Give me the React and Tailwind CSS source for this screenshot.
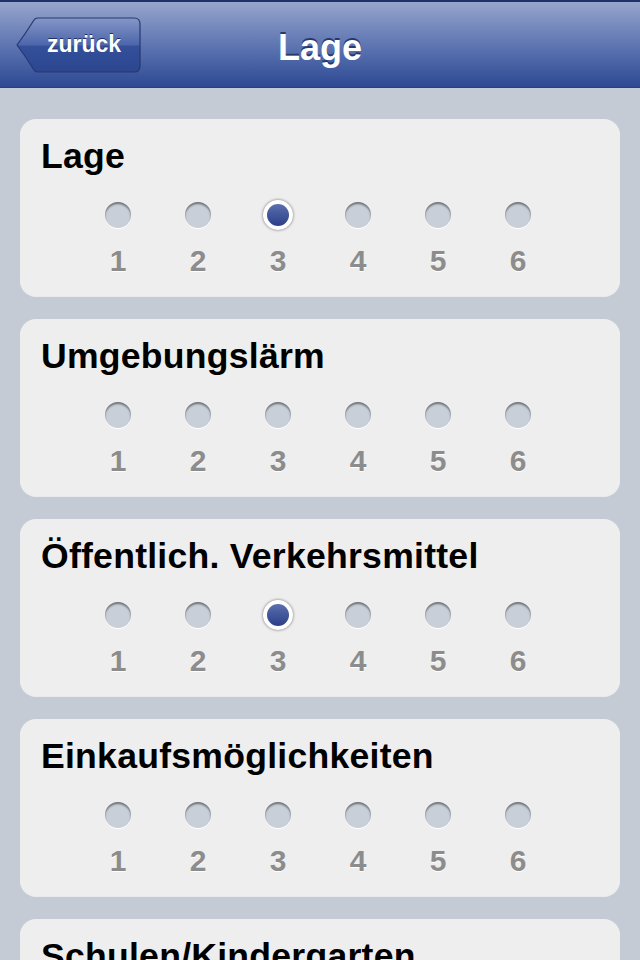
const sections = [
  { title: "Lage", value: 3 },
  { title: "Umgebungslärm", value: null },
  { title: "Öffentlich. Verkehrsmittel", value: 3 },
  { title: "Einkaufsmöglichkeiten", value: null },
  { title: "Schulen/Kindergarten", value: null },
];

const BackButton = () => {
  return (
    <button className="relative w-[126px] h-[58px] ml-[15px] mt-[14px] shrink-0">
      <svg width="126" height="58" viewBox="0 0 126 58" className="absolute inset-0">
        <defs>
          <linearGradient id="backFill" x1="0" y1="0" x2="0" y2="1">
            <stop offset="0" stopColor="#8597c8" />
            <stop offset="0.5" stopColor="#4d66aa" />
            <stop offset="0.52" stopColor="#34509a" />
            <stop offset="1" stopColor="#2c4690" />
          </linearGradient>
        </defs>
        <path
          d="M2 29 C8 21 14 12 19 4 Q20 2 23 2 H119 Q125 2 125 8 V50 Q125 56 119 56 H23 Q20 56 19 54 C14 46 8 37 2 29 Z"
          fill="url(#backFill)"
          stroke="#27386f"
          strokeWidth="1.2"
        />
      </svg>
      <span
        className="relative block text-white font-bold text-[23px] leading-none pl-[12px] pb-[2px]"
        style={{ fontFamily: '"Liberation Sans", Arial, sans-serif', textShadow: "0 -1px 0 #1f2f66" }}
      >
        zurück
      </span>
    </button>
  );
};

const Radio = ({ selected }) => {
  if (selected) {
    return (
      <div className="w-[30px] h-[30px] rounded-full bg-white flex items-center justify-center shadow-[0_0_3px_rgba(0,0,0,0.55)]">
        <div className="w-[22px] h-[22px] rounded-full bg-gradient-to-b from-[#5a6fae] to-[#2b3f88]" />
      </div>
    );
  }
  return (
    <div className="w-[26px] h-[26px] rounded-full bg-[#c8cfd9] shadow-[inset_0_2px_2px_rgba(0,0,0,0.45),0_1px_0_#ffffff]" />
  );
};

const Card = ({ title, value }) => {
  return (
    <div className="h-[177px] mb-[23px] rounded-[16px] bg-[#eeeeee] shadow-[0_1px_0_rgba(255,255,255,0.6)] pt-[17px] pl-[21px] pr-[16px]">
      <h2 className="text-[35.6px] leading-[40px] font-bold text-black tracking-[0.25px]">{title}</h2>
      <div className="flex pl-[37px] mt-[24px]">
        {[1, 2, 3, 4, 5, 6].map((n) => (
          <div key={n} className="w-[80px] flex flex-col items-center">
            <div className="h-[30px] flex items-center justify-center">
              <Radio selected={value === n} />
            </div>
            <span className="mt-[14px] text-[30px] leading-[34px] font-bold text-[#8c8c8c] [text-shadow:0_1px_0_#ffffff]">
              {n}
            </span>
          </div>
        ))}
      </div>
    </div>
  );
};

export default function App() {
  return (
    <div
      className="w-[640px] h-[960px] overflow-hidden bg-[#c5cbd4]"
      style={{ fontFamily: '"Liberation Sans", Arial, sans-serif' }}
    >
      <header className="relative h-[88px] flex border-t-2 border-[#1f2f68] border-b border-b-[#2a3f80] bg-gradient-to-b from-[#97a5cc] via-[#5f76b2] to-[#2d4993]">
        <BackButton />
        <h1 className="absolute left-0 right-0 top-[26px] text-center text-white font-bold text-[36px] leading-[40px] [text-shadow:0_-2px_0_#27386f]">
          Lage
        </h1>
      </header>
      <main className="px-[20px] pt-[31px]">
        {sections.map((s) => (
          <Card key={s.title} title={s.title} value={s.value} />
        ))}
      </main>
    </div>
  );
}
